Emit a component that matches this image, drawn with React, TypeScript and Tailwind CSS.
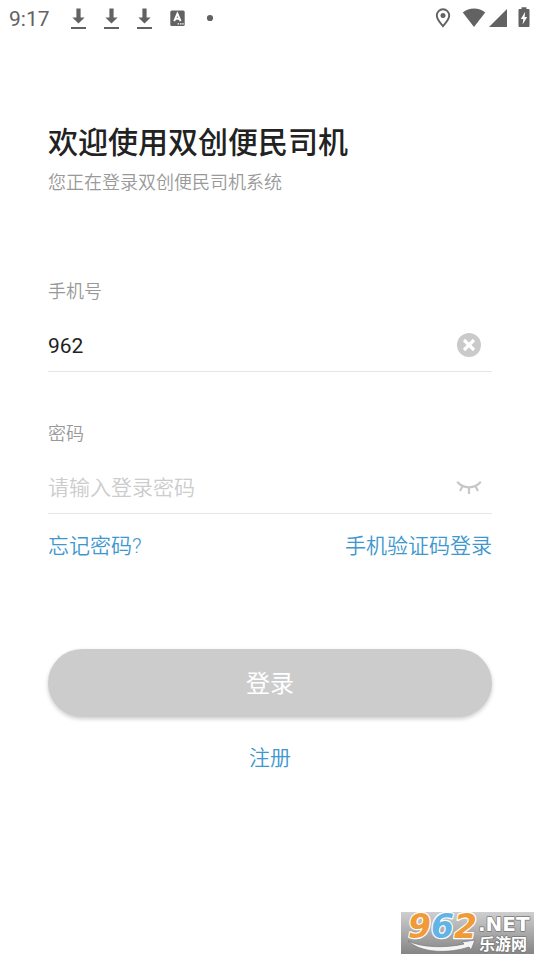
import { useState } from "react";

function DownloadIcon() {
  return (
    <svg className="h-6 w-[17px]" viewBox="0 0 17 24" fill="#626262" aria-hidden="true">
      <path d="M6.4 2.5h4.2v9h4l-6.1 6-6.1-6h4z" />
      <path d="M1 21h15v2H1z" />
    </svg>
  );
}

function KeyboardIcon() {
  return (
    <svg className="h-6 w-[17px]" viewBox="0 0 17 24" aria-hidden="true">
      <rect x="1.3" y="4.4" width="14.4" height="15.6" rx="1.6" fill="#626262" />
      <path d="M5.2 15.2 8.4 7.6l3.2 7.6M6.4 12.8h4" fill="none" stroke="#fff" strokeWidth="1.9" />
      <path d="M8.6 17.2h1.5v1.3H8.6zM11 17.2h1.5v1.3H11zM13.3 17.2h1.4v1.3h-1.4z" fill="#fff" />
    </svg>
  );
}

function StatusBar() {
  return (
    <header className="flex h-9 items-center justify-between pl-[9px] pr-[10px] text-[#626262]">
      <div className="flex items-center gap-4">
        <time className="w-[45px] pt-0.5 text-[21px] leading-6">9:17</time>
        <DownloadIcon />
        <DownloadIcon />
        <DownloadIcon />
        <KeyboardIcon />
        <svg className="h-6 w-[17px]" viewBox="0 0 17 24" aria-hidden="true">
          <circle cx="8" cy="12" r="3.1" fill="#626262" />
        </svg>
      </div>
      <div className="flex items-center" aria-hidden="true">
        <svg className="h-6 w-4" viewBox="0 0 16 24">
          <path
            d="M8 20.2c-2.500-3.200-6.200-6.700-6.200-10.700a6.200 6.200 0 0 1 12.400 0C14.200 13.500 10.500 17 8 20.200z"
            fill="none"
            stroke="#626262"
            strokeWidth="1.9"
          />
          <circle cx="8" cy="9.4" r="2.5" fill="#626262" />
        </svg>
        <svg className="ml-[11px] h-6 w-6" viewBox="0 0 24 24" fill="#626262">
          <path d="M12 21 .8 6.600C4 3.800 7.800 2.400 12 2.400s8 1.400 11.200 4.200z" />
        </svg>
        <svg className="ml-0.5 h-6 w-5" viewBox="0 0 20 24" fill="#626262">
          <path d="M19 3v18H1z" />
        </svg>
        <svg className="ml-2.5 h-6 w-3" viewBox="0 0 12 24">
          <path
            d="M3.500 1.300h5V3h1.700c.8 0 1.300.5 1.300 1.300v15.400c0 .8-.5 1.300-1.300 1.300H1.800c-.8 0-1.300-.5-1.300-1.300V4.300C.5 3.500 1 3 1.800 3h1.700z"
            fill="#626262"
          />
          <path d="M7.200 5.800 2.800 13h2.500l-.7 5.400L9.200 11H6.600z" fill="#fff" />
        </svg>
      </div>
    </header>
  );
}

function ClearIcon() {
  return (
    <svg className="h-[26px] w-[26px]" viewBox="0 0 26 26" aria-hidden="true">
      <circle cx="13" cy="13" r="12" fill="#cacaca" />
      <path d="m8 8 10 10m0-10-10 10" stroke="#fff" strokeWidth="3.2" />
    </svg>
  );
}

function ClosedEyeIcon() {
  return (
    <svg
      className="h-[26px] w-[26px]"
      viewBox="0 0 26 26"
      fill="none"
      stroke="#c8c8c8"
      strokeWidth="2.2"
      aria-hidden="true"
    >
      <path d="M1.200 7.800C4 11.300 8 13.300 13 13.300s9-2 11.800-5.500" />
      <path d="M6.600 12l-2.600 5M13 13.300v6.700M19.400 12l2.600 5" />
    </svg>
  );
}

function Watermark() {
  return (
    <svg
      className="absolute bottom-1.5 right-1.5 h-[48px] w-[133px]"
      viewBox="0 -6 133 48"
      role="img"
      aria-label="962.NET 乐游网"
    >
      <defs>
        <linearGradient id="plate" x1="0" y1="0" x2="0" y2="1">
          <stop offset="0" stopColor="#cfcfcf" />
          <stop offset="1" stopColor="#858585" />
        </linearGradient>
      </defs>
      <rect width="133" height="42" fill="url(#plate)" />
      <path
        d="M7 29c15 7 38 7 56 3l-2-2 13-2-4 10-2-3C47 42 20 41 7 29z"
        fill="#f4f4f4"
        stroke="#777"
        strokeWidth=".7"
      />
      <g
        className="font-['DejaVu_Sans'] text-[33px] font-bold italic"
        stroke="#fff"
        strokeWidth="2.4"
        strokeLinejoin="round"
        paintOrder="stroke"
      >
        <text x="7" y="26">
          <tspan fill="#f19a38">9</tspan>
          <tspan fill="#62b4e6">6</tspan>
          <tspan fill="#f19a38">2</tspan>
        </text>
      </g>
      <g fill="#fff" stroke="#777" strokeWidth="1.4" strokeLinejoin="round" paintOrder="stroke">
        <text x="77" y="19" className="font-['DejaVu_Sans'] text-[20px] font-bold">
          .NET
        </text>
        <text x="78" y="38" className="font-['Noto_Sans_CJK_SC'] text-[16px] font-bold">
          乐游网
        </text>
      </g>
    </svg>
  );
}

export default function App() {
  const [phone, setPhone] = useState("962");
  const [password, setPassword] = useState("");
  const [visible, setVisible] = useState(false);

  return (
    <div className="relative min-h-screen bg-white font-[Roboto,'Noto_Sans_CJK_SC',sans-serif]">
      <StatusBar />
      <main className="px-12 pt-[89px]">
        <h1 className="text-[30px] font-medium leading-9 text-[#222]">欢迎使用双创便民司机</h1>
        <p className="mt-2.5 text-[18px] font-[350] leading-6 text-[#999]">您正在登录双创便民司机系统</p>

        <form className="mt-[85px]" onSubmit={(e) => e.preventDefault()}>
          <label htmlFor="phone" className="block text-[18px] font-[350] leading-6 text-[#999]">
            手机号
          </label>
          <div className="mt-[15px] flex h-[53px] items-center border-b border-[#e6e6e6] pr-[10px]">
            <input
              id="phone"
              type="tel"
              value={phone}
              onChange={(e) => setPhone(e.target.value)}
              className="min-w-0 flex-1 pt-0.5 text-[21px] leading-7 text-[#222] outline-none"
            />
            <button type="button" aria-label="清除" onClick={() => setPhone("")}>
              <ClearIcon />
            </button>
          </div>

          <label htmlFor="password" className="mt-[50px] block text-[18px] font-[350] leading-6 text-[#999]">
            密码
          </label>
          <div className="mt-[15px] flex h-[53px] items-center border-b border-[#e6e6e6] pr-[10px]">
            <input
              id="password"
              type={visible ? "text" : "password"}
              value={password}
              placeholder="请输入登录密码"
              onChange={(e) => setPassword(e.target.value)}
              className="min-w-0 flex-1 pt-0.5 text-[21px] font-[350] leading-7 text-[#222] outline-none placeholder:text-[#ccc]"
            />
            <button type="button" aria-label="显示密码" onClick={() => setVisible(!visible)}>
              <ClosedEyeIcon />
            </button>
          </div>

          <div className="mt-[18px] flex justify-between text-[21px] font-[350] leading-7 text-[#3e97cf]">
            <a href="#forgot">忘记密码?</a>
            <a href="#sms">手机验证码登录</a>
          </div>

          <button
            type="submit"
            className="mt-[89px] block h-[68px] w-full rounded-full bg-[#ccc] pt-0.5 text-[24px] text-white shadow-[0_2px_4px_rgba(0,0,0,0.2)]"
          >
            登录
          </button>
        </form>

        <div className="mt-[27px] text-center text-[21px] font-[350] leading-7 text-[#3e97cf]">
          <a href="#register">注册</a>
        </div>
      </main>
      <Watermark />
    </div>
  );
}
